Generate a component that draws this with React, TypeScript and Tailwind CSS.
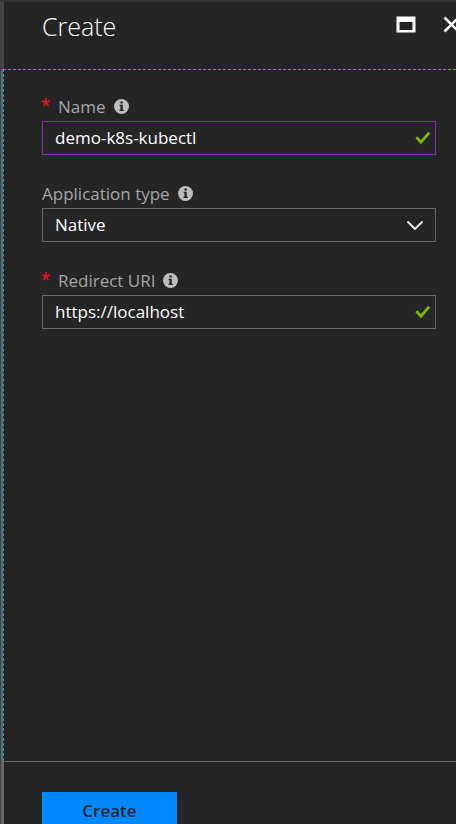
import { useState, type ReactNode } from "react";

function InfoIcon() {
  return (
    <svg className="mb-[2px] size-[15px] shrink-0" viewBox="0 0 15 15" aria-hidden="true">
      <circle cx="7.5" cy="7.5" r="7.5" fill="#bdbdbd" />
      <path d="M6.4 2.6h2.4v2H6.4zM5.6 5.8h3.2v5h1v1.2H5.4v-1.2h1V7h-.8z" fill="#252525" />
    </svg>
  );
}

function ValidIcon() {
  return (
    <svg
      className="pointer-events-none absolute top-[10px] right-[5px] h-[14px] w-4"
      viewBox="0 0 16 14"
      aria-hidden="true"
    >
      <path d="M1.4 6.3 6 11.2 14.2 1.6" fill="none" stroke="#7fba00" strokeWidth="2.8" />
    </svg>
  );
}

function Field({
  id,
  label,
  required,
  children,
}: {
  id: string;
  label: string;
  required?: boolean;
  children: ReactNode;
}) {
  return (
    <div>
      <div className="flex h-7 items-center gap-2">
        <label htmlFor={id} className="flex items-center gap-2 text-[17px] leading-7 text-[#a6a6a6]">
          {required && (
            <svg className="mb-[10px] h-[9px] w-2" viewBox="0 0 8 9" aria-hidden="true">
              <path d="M4 0v4.4M4 4.4 .2 3M4 4.4 7.8 3M4 4.4 1.6 8M4 4.4 6.4 8" stroke="#e81123" strokeWidth="1.7" />
            </svg>
          )}
          {label}
        </label>
        <InfoIcon />
      </div>
      <div className="relative">{children}</div>
    </div>
  );
}

const box = "block h-[34px] w-full border bg-[#252525] pl-3 text-[17px] text-white outline-none";

export default function App() {
  const [name, setName] = useState("demo-k8s-kubectl");
  const [uri, setUri] = useState("https://localhost");
  return (
    <main className="flex h-screen flex-col overflow-hidden border-t-2 border-l border-t-[#333333] border-l-[#444444] bg-[#252525] font-['Open_Sans','Noto_Sans',sans-serif]">
      <header className="flex h-[67px] shrink-0 items-start justify-between overflow-hidden border-l-[3px] border-[#444444] pl-[38px]">
        <h1 className="pt-1 text-[25px] leading-10 font-light text-white">Create</h1>
        <div className="-mr-1 flex gap-[27px] pt-[14px]">
          <button type="button" aria-label="Maximize">
            <svg className="h-[17px] w-5" viewBox="0 0 20 17" aria-hidden="true">
              <path d="M.5.5h19v16H.5zM3.5 6v8h13V6z" fill="#fff" fillRule="evenodd" />
            </svg>
          </button>
          <button type="button" aria-label="Close">
            <svg className="h-[17px] w-[17px]" viewBox="0 0 17 17" aria-hidden="true">
              <path d="m1.5 1.5 14 14M15.5 1.5l-14 14" stroke="#fff" strokeWidth="2.6" />
            </svg>
          </button>
        </div>
      </header>
      <form className="flex min-h-0 flex-1 flex-col" onSubmit={(e) => e.preventDefault()}>
        <div className="flex min-h-0 flex-1 border-l-2 border-[#666666]">
          <div className="flex flex-1 flex-col gap-[25px] border-t border-l border-dashed border-[#00abec] pt-[23px] pr-5 pl-[38px]">
            <Field id="name" label="Name" required>
              <input
                id="name"
                className={`${box} pb-[2px] border-[#8a2da5]`}
                value={name}
                onChange={(e) => setName(e.target.value)}
              />
              <ValidIcon />
            </Field>
            <Field id="type" label="Application type">
              <select id="type" className={`${box} appearance-none border-[#666666]`}>
                <option>Native</option>
                <option>Web app / API</option>
              </select>
              <svg
                className="pointer-events-none absolute top-3 right-3 h-[11px] w-[18px]"
                viewBox="0 0 18 11"
                aria-hidden="true"
              >
                <path d="m1.5 1.5 7.5 7.5 7.5-7.5" fill="none" stroke="#fff" strokeWidth="1.8" />
              </svg>
            </Field>
            <Field id="uri" label="Redirect URI" required>
              <input
                id="uri"
                className={`${box} pb-[2px] border-[#666666]`}
                value={uri}
                onChange={(e) => setUri(e.target.value)}
              />
              <ValidIcon />
            </Field>
          </div>
        </div>
        <footer className="h-[63px] shrink-0 border-l-[3px] border-[#666666]">
          <div className="border-t border-[#666666] pt-[30px] pl-[38px]">
            <button type="submit" className="h-[38px] w-[135px] bg-[#0088ff] text-[17px] font-semibold text-[#252525]">
              Create
            </button>
          </div>
        </footer>
      </form>
    </main>
  );
}
